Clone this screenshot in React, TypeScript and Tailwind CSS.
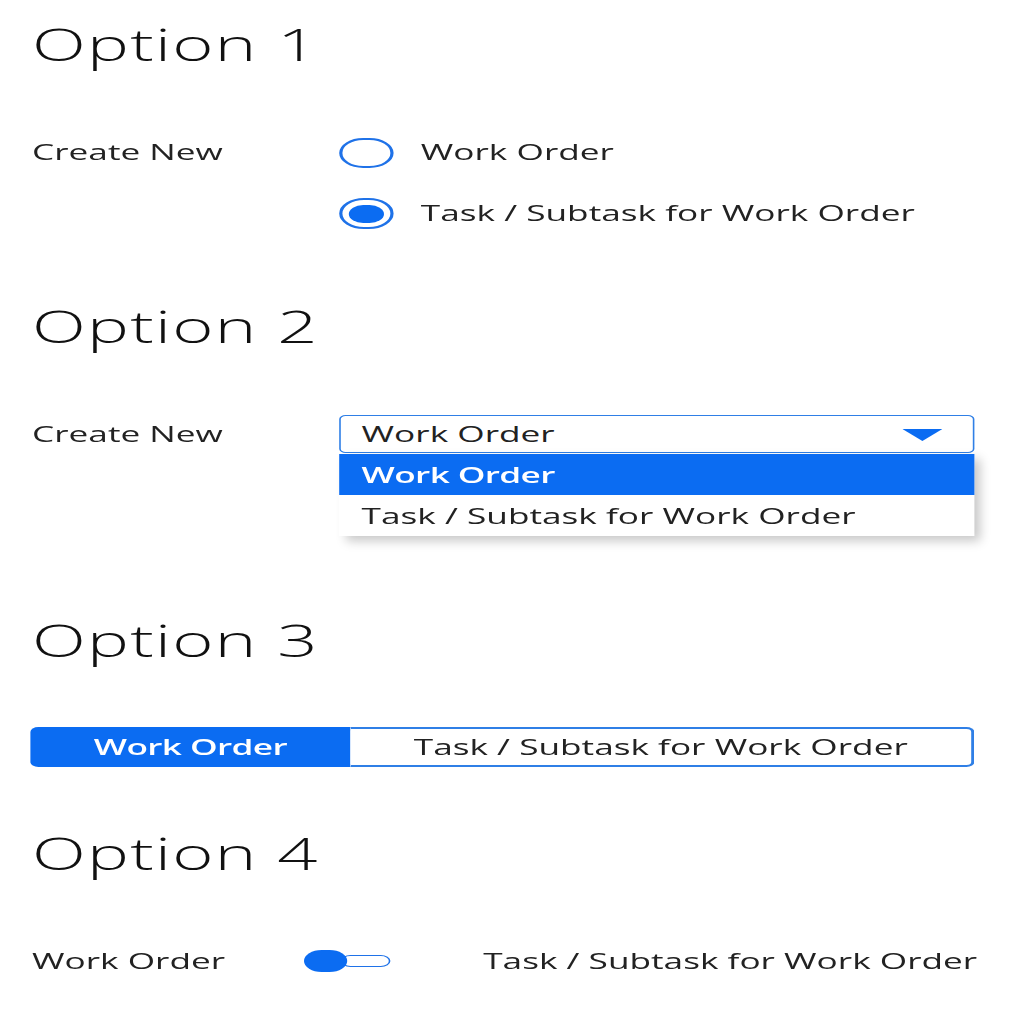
import React from "react";

const font = { fontFamily: '"Open Sans", "Liberation Sans", sans-serif' };

function Heading({ children, className = "" }: { children: React.ReactNode; className?: string }) {
  return (
    <h2 className={`text-[44px] leading-[43px] font-light tracking-[0.8px] text-[#111] ${className}`}>{children}</h2>
  );
}

export default function App() {
  return (
    <div className="w-[1024px] h-[1024px] overflow-hidden bg-white" style={font}>
      <div className="w-[640px] origin-top-left scale-x-[1.6] flex flex-col pl-[20px] text-[#222]">
        {/* Option 1 */}
        <Heading className="mt-[23px]">Option 1</Heading>
        <div className="mt-[71px] flex">
          <div className="w-[192px] text-[22px] leading-[31px] -mt-[1px]">Create New</div>
          <div className="flex flex-col gap-[30px]">
            <div className="flex items-center h-[31px]">
              <span className="w-[34px] h-[30px] rounded-full border-2 border-[#1f72e8] bg-white" />
              <span className="ml-[17px] text-[22px] leading-[31px] -mt-[3px]">Work Order</span>
            </div>
            <div className="flex items-center h-[31px]">
              <span className="w-[34px] h-[31px] rounded-full border-2 border-[#1f72e8] bg-white flex items-center justify-center">
                <span className="w-[22px] h-[18px] rounded-full bg-[#0b6cf2]" />
              </span>
              <span className="ml-[17px] text-[22px] leading-[31px] -mt-[3px]">Task / Subtask for Work Order</span>
            </div>
          </div>
        </div>

        {/* Option 2 */}
        <Heading className="mt-[76px]">Option 2</Heading>
        <div className="mt-[67px] flex">
          <div className="w-[192px] text-[22px] leading-[38px] -mt-[1px]">Create New</div>
          <div className="relative w-[397px]">
            <div className="h-[38px] rounded-[4px] border-[1.5px] border-[#2f7fe6] bg-white flex items-center justify-between pl-[13px] pr-[19px]">
              <span className="text-[22px] leading-[38px] -mt-[2px]">Work Order</span>
              <svg width="25" height="12" viewBox="0 0 25 12" className="mt-[2px]">
                <polygon points="0,0 25,0 12.5,12" fill="#0b6cf2" />
              </svg>
            </div>
            <div className="absolute left-0 right-0 top-[39px] bg-white shadow-[4px_5px_8px_rgba(0,0,0,0.22)]">
              <div className="h-[41px] bg-[#0b6cf2] text-white font-semibold tracking-[-0.4px] text-[22px] leading-[41px] pl-[14px]">
                Work Order
              </div>
              <div className="h-[41px] text-[22px] leading-[41px] pl-[14px]">
                Task / Subtask for Work Order
              </div>
            </div>
          </div>
        </div>

        {/* Option 3 */}
        <Heading className="mt-[166px]">Option 3</Heading>
        <div className="mt-[65px] flex h-[40px] w-[590px] -ml-[1px]">
          <div className="w-[200px] h-full bg-[#0b6cf2] rounded-l-[5px] flex items-center justify-center text-white font-semibold tracking-[-0.4px] text-[22px] leading-[40px]">
            <span className="-mt-[2px]">Work Order</span>
          </div>
          <div className="flex-1 h-full border-2 border-l-0 border-[#2f7fe6] rounded-r-[5px] bg-white flex items-center justify-center text-[22px] leading-[36px]">
            <span className="-mt-[2px]">Task / Subtask for Work Order</span>
          </div>
        </div>

        {/* Option 4 */}
        <Heading className="mt-[65px]">Option 4</Heading>
        <div className="mt-[75px] flex items-center h-[22px]">
          <div className="w-[170px] text-[22px] leading-[31px] -mt-[1px]">Work Order</div>
          <div className="relative w-[54px] h-[22px]">
            <span className="absolute left-[23px] top-[5px] w-[31px] h-[12px] rounded-full border-[1.5px] border-[#1f72e8] bg-white" />
            <span className="absolute left-0 top-0 w-[27px] h-[22px] rounded-full bg-[#0b6cf2]" />
          </div>
          <div className="ml-[58px] text-[22px] leading-[31px] -mt-[1px]">Task / Subtask for Work Order</div>
        </div>
      </div>
    </div>
  );
}
